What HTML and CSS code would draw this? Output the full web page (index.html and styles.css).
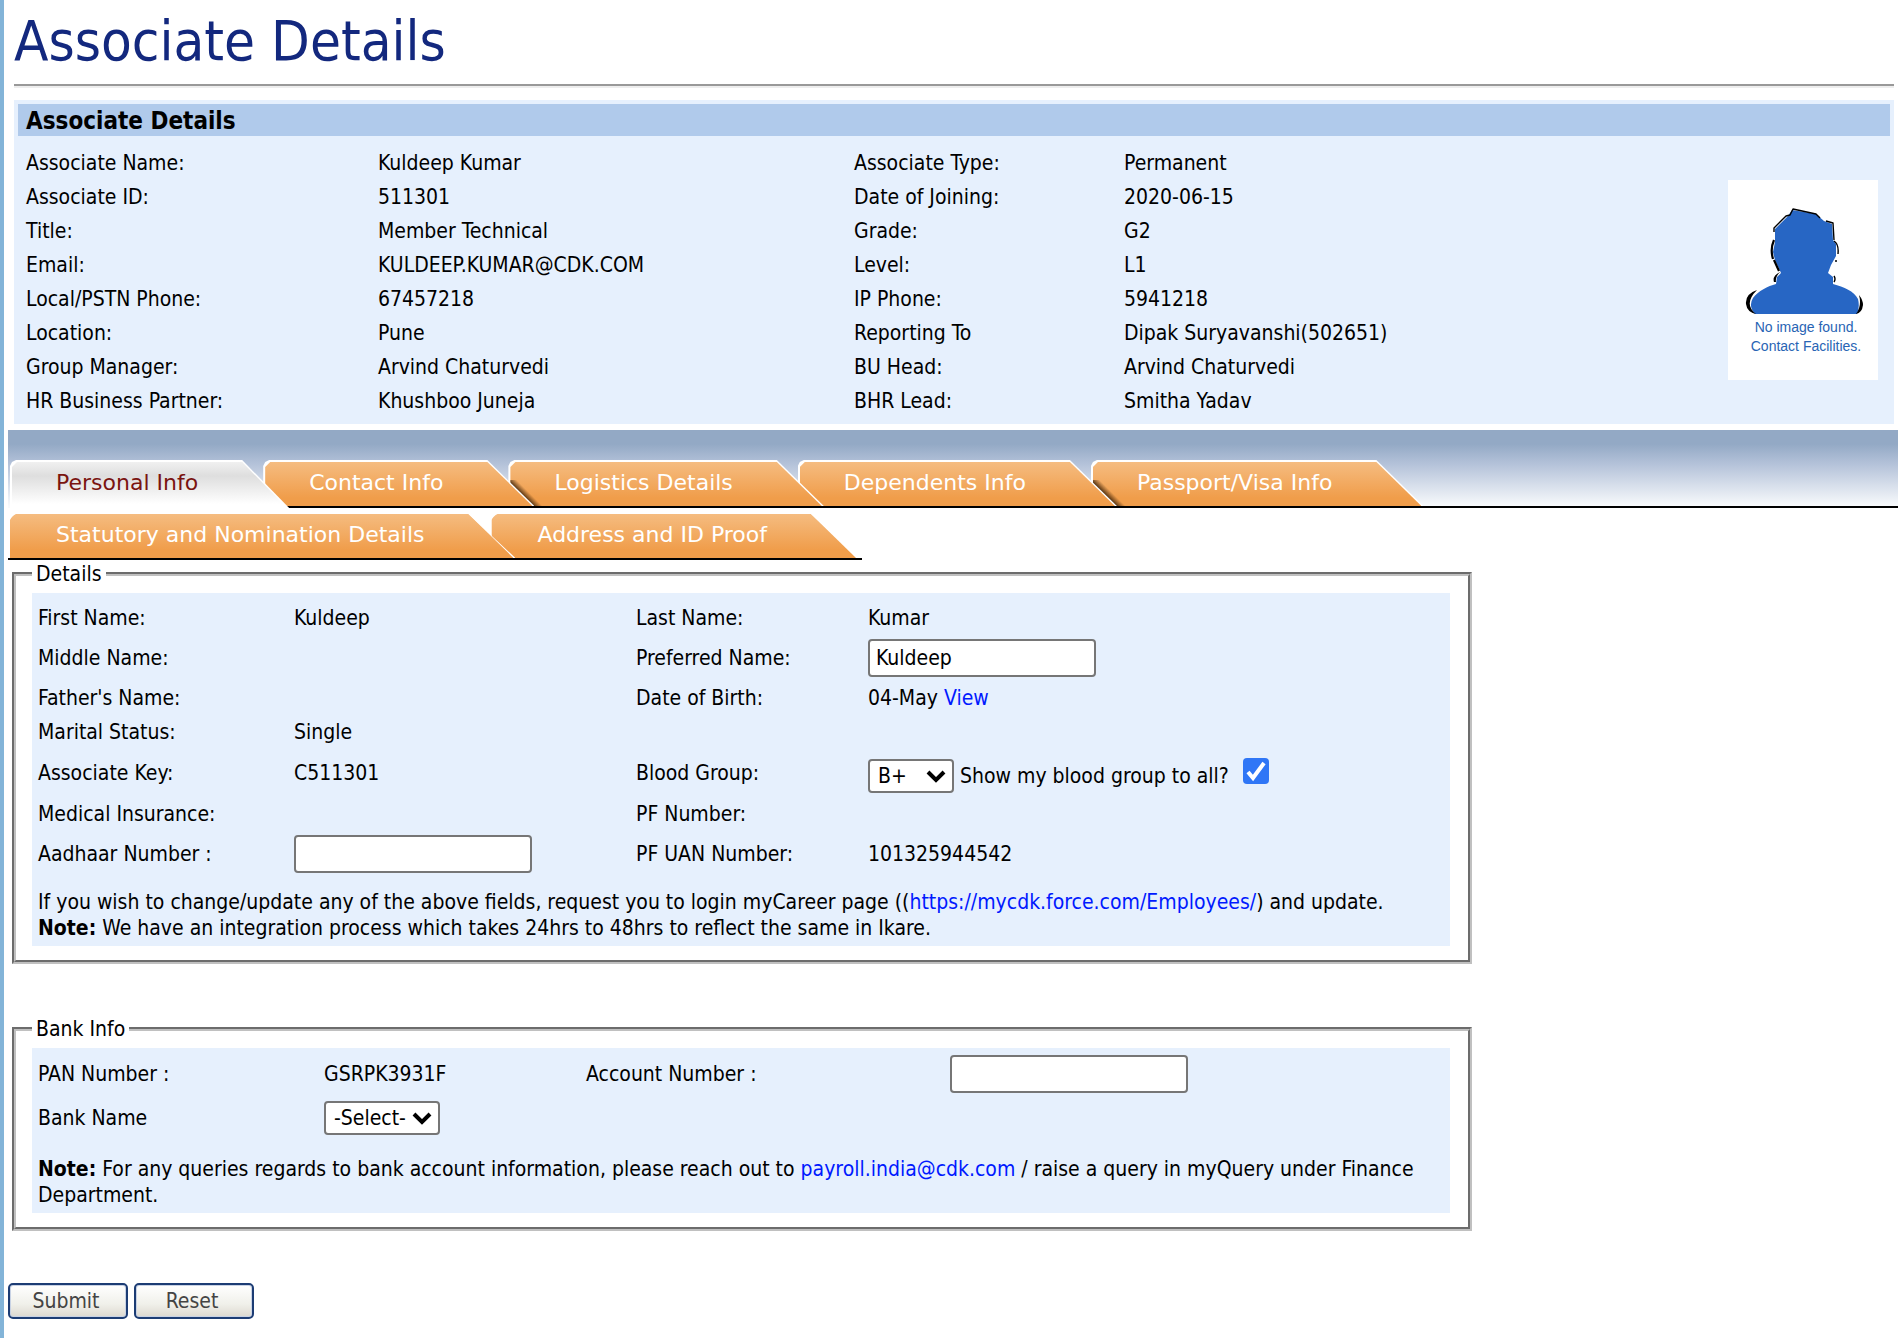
FILE: index.html
```
<!DOCTYPE html>
<html lang="en">
<head>
<meta charset="utf-8">
<title>Associate Details</title>
<link rel="stylesheet" href="styles.css">
</head>
<body>
<header class="intro">
  <h1 class="page-title">Associate Details</h1>
  <hr class="rule">
  <section class="summary">
    <h2 class="summary-title">Associate Details</h2>
    <div class="summary-body">
      <table class="facts">
        <colgroup><col class="c1"><col class="c2"><col class="c3"><col></colgroup>
        <tr><th>Associate Name:</th><td>Kuldeep Kumar</td><th>Associate Type:</th><td>Permanent</td></tr>
        <tr><th>Associate ID:</th><td>511301</td><th>Date of Joining:</th><td>2020-06-15</td></tr>
        <tr><th>Title:</th><td>Member Technical</td><th>Grade:</th><td>G2</td></tr>
        <tr><th>Email:</th><td>KULDEEP.KUMAR@CDK.COM</td><th>Level:</th><td>L1</td></tr>
        <tr><th>Local/PSTN Phone:</th><td>67457218</td><th>IP Phone:</th><td>5941218</td></tr>
        <tr><th>Location:</th><td>Pune</td><th>Reporting To</th><td>Dipak Suryavanshi(502651)</td></tr>
        <tr><th>Group Manager:</th><td>Arvind Chaturvedi</td><th>BU Head:</th><td>Arvind Chaturvedi</td></tr>
        <tr><th>HR Business Partner:</th><td>Khushboo Juneja</td><th>BHR Lead:</th><td>Smitha Yadav</td></tr>
      </table>
      <div class="photo">
        <svg class="person" viewBox="0 0 150 136" aria-hidden="true">
          <path fill="#2766c4" d="M64 30 L88 34 L96 41 L104 44 L105 60 L108 64 L108 76 L103 85 L100 93 L105 97 L105 104 C116 107 126 111 130 119 Q132 127 129 134 L27 134 Q20 126 25 118 C30 111 40 106 48 104 L49 97 L53 93 L47 80 L45 72 L47 62 L47 49 L60 36 Z"/>
          <path fill="none" stroke="#000" stroke-width="1.4" stroke-linejoin="round" d="M46 52 L46 48 L58 36 L62 35 L65 29 L88 34 L92 38 M98 41 L105 43 L106 60 M106 61 Q111 64 110 74 M107 81 h2 M106 96 Q108 99 106 102"/>
          <path fill="none" stroke="#000" stroke-width="2.2" d="M46 60 Q42 69 45 79 M46 80 L51 91"/>
          <path d="M52 92 Q44 96 46 102 L48 102 Q47 97 52 92Z M29 110 Q17 114 18 124 Q19 132 28 134 Q15 124 29 110Z M131 115 Q135 120 135 125 Q134 133 128 134 Q134 126 131 115Z"/>
        </svg>
        <p class="photo-note">No image found.<br>Contact Facilities.</p>
      </div>
    </div>
  </section>
</header>

<nav class="tabs">
  <ul class="tab-row tab-band">
    <li class="tab current"><a href="#personal">Personal Info</a></li>
    <li class="tab"><a href="#contact">Contact Info</a></li>
    <li class="tab shaded"><a href="#logistics">Logistics Details</a></li>
    <li class="tab"><a href="#dependents">Dependents Info</a></li>
    <li class="tab shaded"><a href="#passport">Passport/Visa Info</a></li>
  </ul>
  <ul class="tab-row tab-extra">
    <li class="tab"><a href="#statutory">Statutory and Nomination Details</a></li>
    <li class="tab"><a href="#address">Address and ID Proof</a></li>
  </ul>
</nav>

<form class="form" id="personal">
  <fieldset class="group">
    <legend>Details</legend>
    <div class="sheet">
      <table class="fields">
        <colgroup><col class="d1"><col class="d2"><col class="d3"><col></colgroup>
        <tr><th>First Name:</th><td>Kuldeep</td><th>Last Name:</th><td>Kumar</td></tr>
        <tr class="tall"><th>Middle Name:</th><td></td><th><label for="preferred">Preferred Name:</label></th><td><input class="text narrow" id="preferred" type="text" value="Kuldeep"></td></tr>
        <tr><th>Father's Name:</th><td></td><th>Date of Birth:</th><td>04-May <a href="#dob">View</a></td></tr>
        <tr><th>Marital Status:</th><td>Single</td><th></th><td></td></tr>
        <tr class="taller"><th>Associate Key:</th><td>C511301</td><th><label for="blood">Blood Group:</label></th>
          <td><div class="blood"><select class="pick short" id="blood"><option>B+</option></select><label for="show-blood">Show my blood group to all?</label><input class="tick" id="show-blood" type="checkbox" checked></div></td></tr>
        <tr><th>Medical Insurance:</th><td></td><th>PF Number:</th><td></td></tr>
        <tr class="tall"><th><label for="aadhaar">Aadhaar Number :</label></th><td><input class="text" id="aadhaar" type="text"></td><th>PF UAN Number:</th><td>101325944542</td></tr>
      </table>
      <p class="note">If you wish to change/update any of the above fields, request you to login myCareer page ((<a href="https://mycdk.force.com/Employees/">https://mycdk.force.com/Employees/</a>) and update.<br><b>Note:</b> We have an integration process which takes 24hrs to 48hrs to reflect the same in Ikare.</p>
    </div>
  </fieldset>

  <fieldset class="group">
    <legend>Bank Info</legend>
    <div class="sheet bank">
      <table class="fields">
        <colgroup><col class="b1"><col class="b2"><col class="b3"><col></colgroup>
        <tr><th>PAN Number :</th><td>GSRPK3931F</td><th><label for="account">Account Number :</label></th><td><input class="text" id="account" type="text"></td></tr>
        <tr><th><label for="bank">Bank Name</label></th><td><select class="pick" id="bank"><option>-Select-</option></select></td><th></th><td></td></tr>
      </table>
      <p class="note"><b>Note:</b> For any queries regards to bank account information, please reach out to <a href="mailto:payroll.india@cdk.com">payroll.india@cdk.com</a> / raise a query in myQuery under Finance Department.</p>
    </div>
  </fieldset>

  <div class="actions">
    <button class="btn" type="submit">Submit</button>
    <button class="btn" type="reset">Reset</button>
  </div>
</form>
</body>
</html>
```
FILE: styles.css
```
* { box-sizing: border-box; }

html { min-height: 100%; border-left: 4px solid #83b4d8; background: #fff; }

body {
  margin: 0;
  padding: 10px 0 16px 4px;
  color: #000;
  font: 21px/26px Tahoma, "DejaVu Sans Condensed", "DejaVu Sans", sans-serif;
}

a { color: #0019ff; text-decoration: none; }
p, ul { margin: 0; padding: 0; }
th { font-weight: normal; text-align: left; }
table { width: 100%; border-collapse: collapse; table-layout: fixed; }
td, th { padding: 0; height: 34px; vertical-align: middle; white-space: nowrap; }

/* Heading and summary */
.intro { padding: 0 4px 6px 6px; }
.page-title { margin: 0; color: #13287e; font-size: 56px; font-weight: normal; line-height: 62px; }
.rule { margin: 12px 0; height: 4px; border: 0; border-top: 2px solid #999; border-bottom: 2px solid #eee; }

.summary { padding: 4px; background: #e6f0fd; }
.summary-title { margin: 0; padding: 2px 0 0 8px; background: #b0caeb; font-size: 24px; line-height: 30px; }
.summary-body { display: flex; align-items: flex-start; padding: 10px 12px 2px 8px; }
.facts { flex: 1; }
.c1 { width: 352px; }
.c2 { width: 476px; }
.c3 { width: 270px; }

.photo { width: 150px; height: 200px; margin-top: 34px; background: #fff; }
.person { display: block; width: 150px; height: 136px; }
.photo-note { color: #2864b4; font: 14px/19px Arial, "Liberation Sans", sans-serif; text-align: center; padding: 2px 0 0 6px; }

/* Tabs */
.tab-row { display: flex; list-style: none; padding-left: 2px; font-family: Verdana, "DejaVu Sans", sans-serif; font-size: 22px; }
.tab-band {
  padding-top: 30px;
  background: linear-gradient(#000, #000) 100% 100% / calc(100% - 6px) 2px no-repeat,
    linear-gradient(#93a9c5 0, #93a9c5 14px, #b4c2d9 34px, #f8fafc 76px);
}
.tab-extra { width: fit-content; margin-top: 6px; padding-right: 4px; border-bottom: 2px solid #000; }

.tab {
  position: relative;
  height: 46px;
  margin-right: -26px;
  padding: 0 91px 0 46px;
  background: #fff;
  line-height: 45px;
  white-space: nowrap;
  clip-path: polygon(0 6px, 2px 2px, 6px 0, calc(100% - 47px) 0, 100% 100%, 0 100%);
}
.tab:last-child { margin-right: 0; }
.tab:nth-child(1) { z-index: 5; }
.tab:nth-child(2) { z-index: 4; }
.tab:nth-child(3) { z-index: 3; }
.tab:nth-child(4) { z-index: 2; }
.tab::before {
  content: "";
  position: absolute;
  inset: 2px 2px 0 2px;
  background: linear-gradient(#f5bc80, #f09d4a 36px);
  clip-path: polygon(0 5px, 5px 0, calc(100% - 45px) 0, 100% 100%, 0 100%);
}
.tab.shaded::before {
  background: linear-gradient(45deg, rgba(40, 20, 0, .85) 16px, transparent 23px) 0 100% / 34px 26px no-repeat,
    linear-gradient(#f5bc80, #f09d4a 36px);
}
.tab a { position: relative; color: #fff; }
.tab.current { height: 48px; }
.tab.current::before { background: linear-gradient(#f0f0f0, #dedede 14px, #fff 42px); }
.tab.current a { color: #7a1410; }
.tab-extra .tab { height: 44px; margin-right: -24px; line-height: 41px; }
.tab-extra .tab::before { top: 0; left: 0; }
.tab-extra .tab:last-child { margin-right: 0; }

/* Form groups */
.form { padding-top: 1px; }
.group {
  width: 77.25%;
  margin: 0 0 52px 4px;
  padding: 6px 18px 14px 16px;
  border: 4px groove #c0c0c0;
}
.group legend { padding: 0 4px; }
.sheet { padding: 8px 6px 5px; background: #e6f0fd; }
.tall > * { height: 46px; }
.taller > * { height: 48px; }
.d1 { width: 256px; }
.d2 { width: 342px; }
.d3 { width: 232px; }
.b1 { width: 286px; }
.b2 { width: 262px; }
.b3 { width: 364px; }
.note { padding-top: 12px; }

.sheet.bank { padding-top: 4px; }
.bank td, .bank th { height: 44px; }
.bank .note { padding-top: 16px; }

.text, .pick {
  display: block;
  border: 2px solid #767676;
  border-radius: 4px;
  background: #fff;
  color: #000;
  font: inherit;
}
.text { width: 238px; height: 38px; padding: 0 6px; }
.text.narrow { width: 228px; }
.pick {
  appearance: none;
  width: 116px;
  height: 34px;
  padding: 0 8px;
  background: #fff url("data:image/svg+xml,%3Csvg xmlns='http://www.w3.org/2000/svg' width='20' height='14'%3E%3Cpath d='M2 3l8 8 8-8' fill='none' stroke='%23000' stroke-width='4'/%3E%3C/svg%3E") right 6px center no-repeat;
}
.pick.short { width: 86px; }
.blood { display: flex; align-items: center; gap: 6px; padding-top: 6px; }
.tick {
  appearance: none;
  width: 26px;
  height: 26px;
  margin: 0 0 10px 8px;
  border-radius: 4px;
  background: #2f76f6 url("data:image/svg+xml,%3Csvg xmlns='http://www.w3.org/2000/svg' width='26' height='26'%3E%3Cpath d='M5 14l5 6L21 5' fill='none' stroke='%23fff' stroke-width='4'/%3E%3C/svg%3E") center no-repeat;
}

.actions { display: flex; gap: 6px; }
.btn {
  width: 120px;
  height: 36px;
  padding: 0 4px 0 0;
  border: 2px solid #1c3c74;
  border-radius: 5px;
  background: linear-gradient(#fff, #f0f0ea 60%, #dcd8cf);
  box-shadow: inset 0 0 0 1px #c8d2e4;
  color: #444;
  font: inherit;
}
```
